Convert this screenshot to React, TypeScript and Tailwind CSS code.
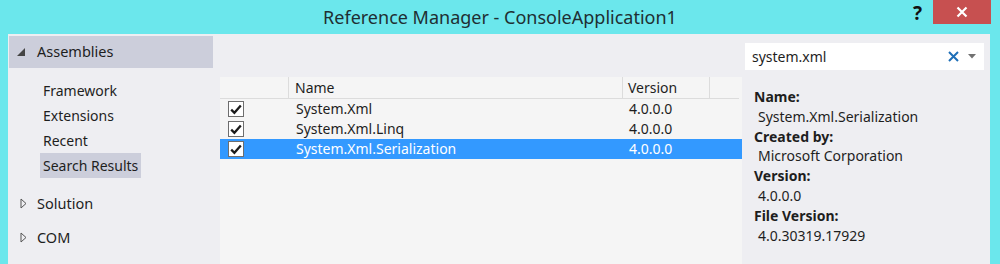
import React from 'react';

const font = { fontFamily: '"Noto Sans", "Open Sans", sans-serif' };

type Row = { name: string; version: string; selected?: boolean };

const rows: Row[] = [
  { name: 'System.Xml', version: '4.0.0.0' },
  { name: 'System.Xml.Linq', version: '4.0.0.0' },
  { name: 'System.Xml.Serialization', version: '4.0.0.0', selected: true },
];

function Check() {
  return (
    <div className="w-[16px] h-[16px] bg-white border border-[#6e6e6e] flex items-center justify-center">
      <svg width="12" height="11" viewBox="0 0 12 11">
        <path d="M1.2 5.6 L4.4 8.8 L10.8 1.6" fill="none" stroke="#1b1b1b" strokeWidth="2.3" />
      </svg>
    </div>
  );
}

function Expander({ open }: { open?: boolean }) {
  if (open) {
    return (
      <svg width="9" height="9" viewBox="0 0 9 9" className="shrink-0">
        <polygon points="8,0 8,8 0,8" fill="#444" />
      </svg>
    );
  }
  return (
    <svg width="7" height="11" viewBox="0 0 7 11" className="shrink-0">
      <polygon points="1,1 6,5.5 1,10" fill="none" stroke="#555" strokeWidth="1" />
    </svg>
  );
}

export default function App() {
  return (
    <div className="w-[1000px] h-[264px] bg-[#6be7ec] flex flex-col overflow-hidden text-[#1e1e1e]" style={font}>
      {/* Title bar */}
      <div className="h-[34px] grid grid-cols-[1fr_auto_1fr] shrink-0">
        <div />
        <div className="text-[18px] leading-[34px] text-[#1f2f33]">Reference Manager - ConsoleApplication1</div>
        <div className="flex justify-end items-start pr-[9px]">
          <span className="text-[19px] font-bold leading-[26px] mr-[11px] text-[#111]">?</span>
          <div className="w-[58px] h-[24px] bg-[#c75050] flex items-center justify-center">
            <svg width="12" height="12" viewBox="0 0 12 12">
              <path d="M1.5 1.5 L10.5 10.5 M10.5 1.5 L1.5 10.5" stroke="#fff" strokeWidth="2.2" />
            </svg>
          </div>
        </div>
      </div>

      {/* Body */}
      <div className="ml-[8px] w-[982px] flex-1 bg-[#eeeef2] flex min-h-0">
        {/* Left nav */}
        <div className="w-[205px] pt-[2px] pl-[1px] text-[14px]">
          <div className="h-[32px] bg-[#cccedb] flex items-center pl-[8px] gap-[11px] text-[14.5px]">
            <Expander open />
            <span>Assemblies</span>
          </div>
          <div className="flex flex-col pt-[10px] pl-[31px]">
            <div className="h-[25px] leading-[25px] px-[3px]">Framework</div>
            <div className="h-[25px] leading-[25px] px-[3px]">Extensions</div>
            <div className="h-[25px] leading-[25px] px-[3px]">Recent</div>
            <div className="h-[25px] leading-[25px] px-[3px] bg-[#cccedb] self-start">Search Results</div>
          </div>
          <div className="flex items-center h-[25px] mt-[13px] pl-[11px] gap-[10px] text-[14.5px]">
            <Expander />
            <span>Solution</span>
          </div>
          <div className="flex items-center h-[25px] mt-[9px] pl-[11px] gap-[10px] text-[14.5px]">
            <Expander />
            <span>COM</span>
          </div>
        </div>

        {/* Results table */}
        <div className="w-[532px] pt-[43px] pl-[7px]">
          <div className="w-[522px] h-full bg-[#f5f5f5] text-[14px]">
            <div className="flex h-[22px] border-b border-[#dcdcdc] w-[519px]">
              <div className="w-[69px] border-r border-[#dcdcdc]" />
              <div className="w-[334px] border-r border-[#dcdcdc] pl-[6px] leading-[21px]">Name</div>
              <div className="w-[87px] border-r border-[#dcdcdc] pl-[5px] leading-[21px]">Version</div>
              <div className="flex-1" />
            </div>
            {rows.map((r) => (
              <div
                key={r.name}
                className={`flex h-[20px] items-center ${r.selected ? 'bg-[#3399ff] text-white' : ''}`}
              >
                <div className="w-[69px] pl-[8px] flex items-center">
                  <Check />
                </div>
                <div className="w-[334px] pl-[7px] leading-[20px]">{r.name}</div>
                <div className="w-[87px] pl-[6px] leading-[20px]">{r.version}</div>
              </div>
            ))}
          </div>
        </div>

        {/* Details */}
        <div className="flex-1 pt-[9px] text-[14px]">
          <div className="w-[239px] h-[27px] bg-white flex items-center pl-[7px] pr-[8px]">
            <span className="flex-1">system.xml</span>
            <svg width="11" height="11" viewBox="0 0 11 11" className="mr-[9px]">
              <path d="M1 1 L10 10 M10 1 L1 10" stroke="#1e6fb8" strokeWidth="2" />
            </svg>
            <svg width="8" height="5" viewBox="0 0 8 5">
              <polygon points="0,0 8,0 4,4.5" fill="#717171" />
            </svg>
          </div>
          <div className="pl-[9px] pt-[17px] leading-[19.8px]">
            <div className="font-bold">Name:</div>
            <div className="pl-[4px]">System.Xml.Serialization</div>
            <div className="font-bold">Created by:</div>
            <div className="pl-[4px]">Microsoft Corporation</div>
            <div className="font-bold">Version:</div>
            <div className="pl-[4px]">4.0.0.0</div>
            <div className="font-bold">File Version:</div>
            <div className="pl-[4px]">4.0.30319.17929</div>
          </div>
        </div>
      </div>
    </div>
  );
}
